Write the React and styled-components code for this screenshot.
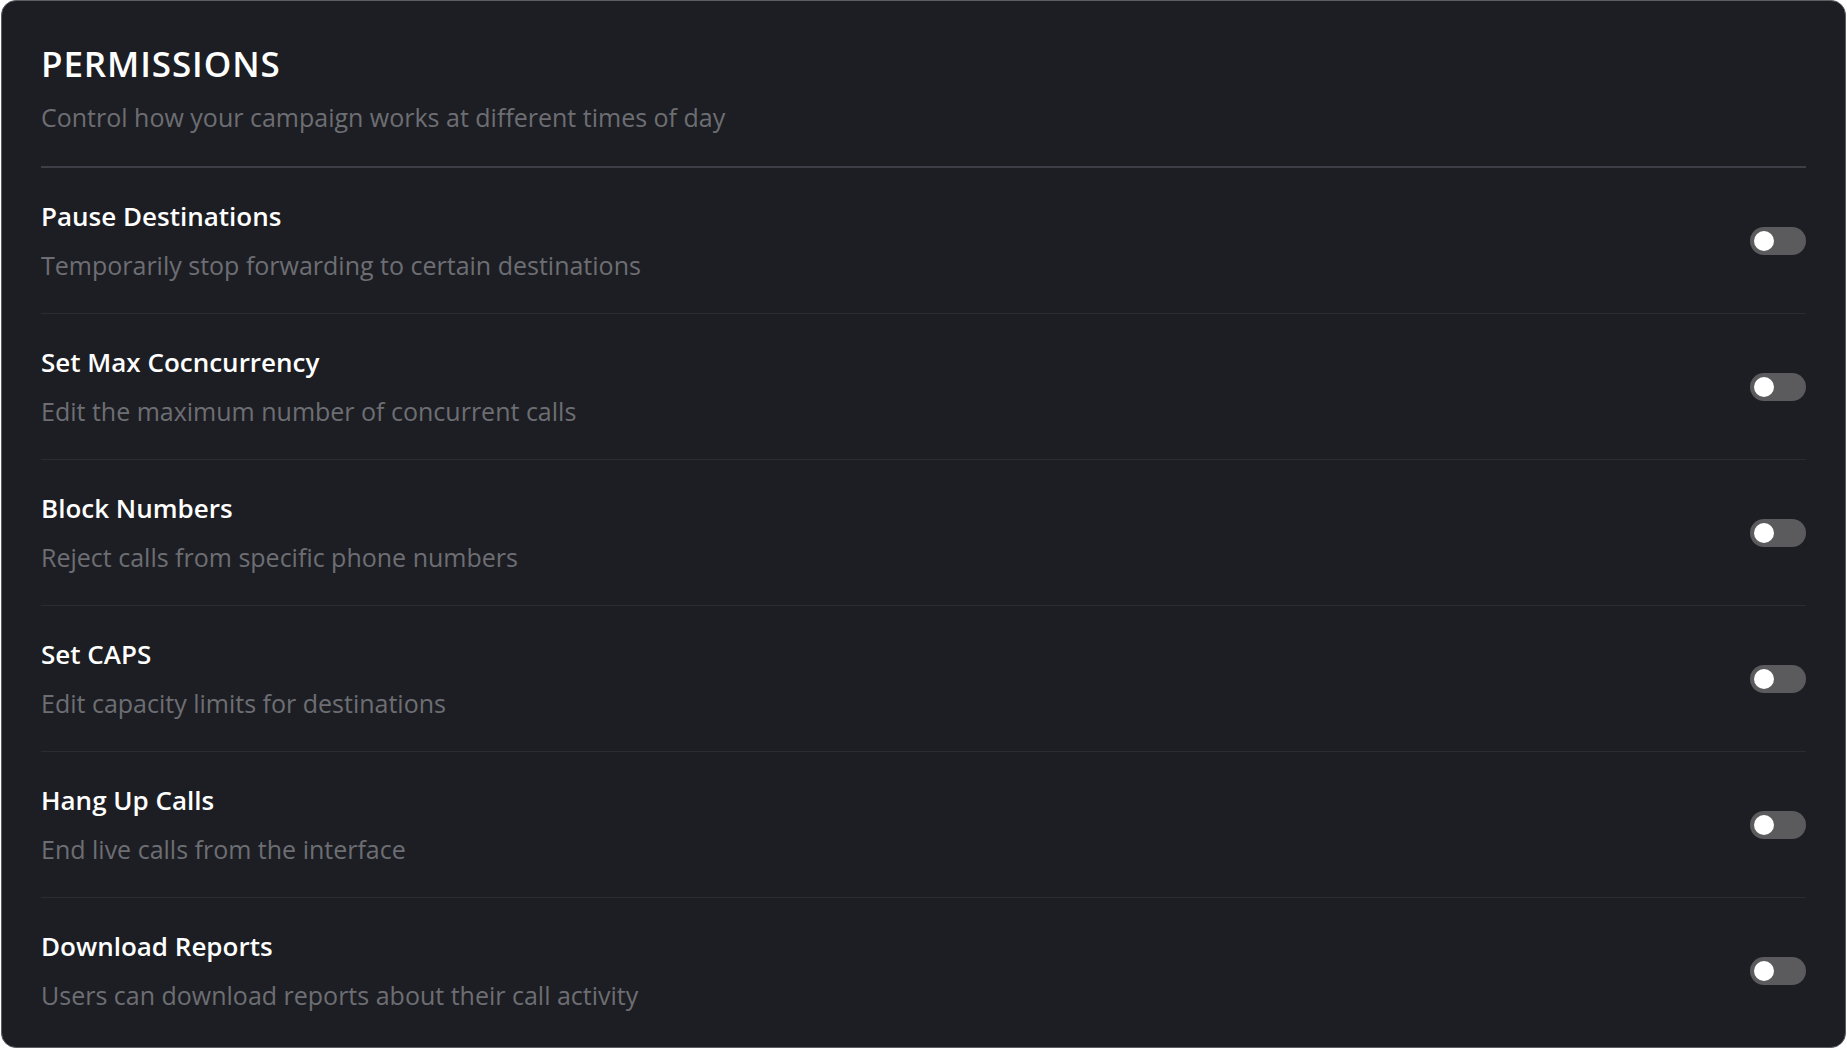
import React, { useState } from 'react';
import styled, { createGlobalStyle } from 'styled-components';

const GlobalStyle = createGlobalStyle`
  html, body {
    margin: 0;
    padding: 0;
    background: #ffffff;
  }
  body {
    font-family: "Open Sans", "Noto Sans", Arial, sans-serif;
    -webkit-font-smoothing: antialiased;
  }
  * { box-sizing: border-box; }
`;

const Card = styled.section`
  margin: 0 1px;
  height: 1048px;
  overflow: hidden;
  background: #1d1e23;
  border: 1.5px solid #5d5e64;
  border-radius: 15px;
  padding: 42px 39px 6px 39px;
`;

const Header = styled.header`
  display: flex;
  flex-direction: column;
  gap: 15px;
  padding-bottom: 32px;
  border-bottom: 2px solid #3e3f46;
`;

const Title = styled.h1`
  margin: 0;
  font-size: 35px;
  line-height: 42px;
  font-weight: 600;
  letter-spacing: 0.9px;
  color: #ffffff;
`;

const Subtitle = styled.p`
  margin: 0;
  font-size: 25px;
  line-height: 34px;
  color: #6d6e73;
`;

const List = styled.div`
  display: flex;
  flex-direction: column;
`;

const Row = styled.div`
  display: flex;
  align-items: center;
  justify-content: space-between;
  padding: 31px 0 31px;
  border-bottom: 1px solid #2b2c32;

  &:last-child {
    border-bottom: none;
  }
`;

const Text = styled.div`
  display: flex;
  flex-direction: column;
  gap: 15px;
`;

const RowTitle = styled.div`
  font-size: 26px;
  line-height: 34px;
  font-weight: 600;
  color: #ffffff;
`;

const RowDesc = styled.div`
  font-size: 25px;
  line-height: 34px;
  color: #6d6e73;
`;

const Track = styled.button`
  position: relative;
  flex: none;
  width: 56px;
  height: 28px;
  padding: 0;
  border: none;
  border-radius: 14px;
  background: ${(p) => (p.on ? '#4f7cff' : '#5b5b5d')};
  cursor: pointer;
  transition: background 0.15s;
`;

const Knob = styled.span`
  position: absolute;
  top: 4px;
  left: ${(p) => (p.on ? '32px' : '4px')};
  width: 20px;
  height: 20px;
  border-radius: 50%;
  background: #ffffff;
  transition: left 0.15s;
`;

const permissions = [
  { id: 'pause', name: 'Pause Destinations', desc: 'Temporarily stop forwarding to certain destinations' },
  { id: 'concurrency', name: 'Set Max Cocncurrency', desc: 'Edit the maximum number of concurrent calls' },
  { id: 'block', name: 'Block Numbers', desc: 'Reject calls from specific phone numbers' },
  { id: 'caps', name: 'Set CAPS', desc: 'Edit capacity limits for destinations' },
  { id: 'hangup', name: 'Hang Up Calls', desc: 'End live calls from the interface' },
  { id: 'reports', name: 'Download Reports', desc: 'Users can download reports about their call activity' },
];

function Toggle({ on, onClick }) {
  return (
    <Track type="button" on={on ? 1 : 0} onClick={onClick} aria-pressed={on}>
      <Knob on={on ? 1 : 0} />
    </Track>
  );
}

export default function App() {
  const [enabled, setEnabled] = useState({});

  const flip = (id) => {
    setEnabled((prev) => ({ ...prev, [id]: !prev[id] }));
  };

  return (
    <>
      <GlobalStyle />
      <Card>
        <Header>
          <Title>PERMISSIONS</Title>
          <Subtitle>Control how your campaign works at different times of day</Subtitle>
        </Header>
        <List>
          {permissions.map((item) => (
            <Row key={item.id}>
              <Text>
                <RowTitle>{item.name}</RowTitle>
                <RowDesc>{item.desc}</RowDesc>
              </Text>
              <Toggle on={!!enabled[item.id]} onClick={() => flip(item.id)} />
            </Row>
          ))}
        </List>
      </Card>
    </>
  );
}
